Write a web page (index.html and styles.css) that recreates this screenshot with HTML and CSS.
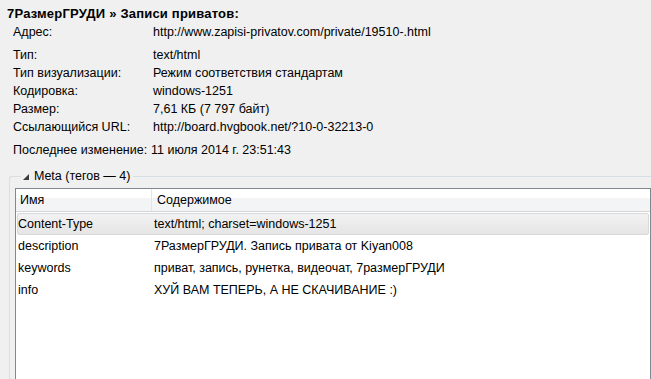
FILE: index.html
```html
<!DOCTYPE html>
<html>
<head>
<meta charset="utf-8">
<link rel="stylesheet" href="styles.css">
</head>
<body>
<div class="title">7РазмерГРУДИ » Записи приватов:</div>
<div class="props">
  <div class="row"><span class="lbl">Адрес:</span><span class="val">http://www.zapisi-privatov.com/private/19510-.html</span></div>
  <div class="group">
    <div class="row"><span class="lbl">Тип:</span><span class="val">text/html</span></div>
    <div class="row"><span class="lbl">Тип визуализации:</span><span class="val">Режим соответствия стандартам</span></div>
    <div class="row"><span class="lbl">Кодировка:</span><span class="val">windows-1251</span></div>
    <div class="row"><span class="lbl">Размер:</span><span class="val">7,61 КБ (7 797 байт)</span></div>
    <div class="row"><span class="lbl">Ссылающийся URL:</span><span class="val">http://board.hvgbook.net/?10-0-32213-0</span></div>
  </div>
  <div class="row last"><span class="lbl">Последнее изменение:</span><span class="val">11 июля 2014 г. 23:51:43</span></div>
</div>
<fieldset class="meta">
  <legend class="legend"><svg class="tri" width="6" height="6" viewBox="0 0 6 6"><path d="M6 0 L6 6 L0 6 Z" fill="#3c3c3c"/></svg>Meta (тегов — 4)</legend>
  <div class="tree">
    <div class="thead">
      <div class="c1">Имя</div>
      <div class="c2">Содержимое</div>
    </div>
    <div class="trow sel"><div class="c1">Content-Type</div><div class="c2">text/html; charset=windows-1251</div></div>
    <div class="trow"><div class="c1">description</div><div class="c2">7РазмерГРУДИ. Запись привата от Kiyan008</div></div>
    <div class="trow"><div class="c1">keywords</div><div class="c2">приват, запись, рунетка, видеочат, 7размерГРУДИ</div></div>
    <div class="trow"><div class="c1">info</div><div class="c2">ХУЙ ВАМ ТЕПЕРЬ, А НЕ СКАЧИВАНИЕ :)</div></div>
  </div>
</fieldset>
</body>
</html>
```
FILE: styles.css
```css
html, body {
  margin: 0;
  padding: 0;
  background: #f0f0f0;
  width: 651px;
  height: 379px;
  overflow: hidden;
}
body {
  font-family: "Liberation Sans", Arial, sans-serif;
  font-size: 12.5px;
  color: #000;
}
.title {
  font-weight: bold;
  font-size: 13px;
  letter-spacing: 0.2px;
  padding: 6px 0 0 7px;
  height: 17px;
  line-height: 15px;
}
.props {
  display: flex;
  flex-direction: column;
}
.row {
  display: flex;
  height: 18px;
  line-height: 18px;
  white-space: nowrap;
}
.lbl {
  width: 153px;
  padding-left: 13px;
  box-sizing: border-box;
  flex: none;
}
.group {
  margin-top: 5px;
  margin-bottom: 5px;
}
.last .lbl {
  width: 151px;
}
.meta {
  margin: 10px 0 0 9px;
  padding: 0 0 0 5px;
  border: 1px solid #d5dfe5;
  border-right: none;
  border-bottom: none;
  border-top-left-radius: 3px;
  height: 400px;
}
.legend {
  padding: 0 3px 0 2px;
  margin-left: 6px;
  line-height: 14px;
}
.tri {
  margin-right: 5px;
  vertical-align: 0px;
}
.tree {
  margin-top: 5px;
  background: #fff;
  border: 1px solid #828790;
  border-bottom: none;
  height: 400px;
  box-sizing: border-box;
}
.thead {
  display: flex;
  height: 22px;
  line-height: 22px;
  background: linear-gradient(#ffffff 0%, #ffffff 40%, #f3f4f6 41%, #f3f4f6 100%);
  border-bottom: 1px solid #d5d5d5;
}
.thead .c1 {
  width: 136px;
  padding-left: 4px;
  border-right: 1px solid #e3e6e8;
  box-sizing: border-box;
}
.thead .c2 {
  padding-left: 5px;
}
.trow {
  display: flex;
  height: 20px;
  line-height: 20px;
  margin: 0 1px;
  border: 1px solid transparent;
  border-radius: 2px;
  white-space: nowrap;
}
.trow.sel {
  margin-top: 1px;
  background: linear-gradient(#f2f2f2, #e5e5e5);
  border-color: #d9d9d9;
}
.trow .c1 {
  width: 136px;
  padding-left: 0;
  flex: none;
}
.trow .c2 {
  padding-left: 0;
}
```
